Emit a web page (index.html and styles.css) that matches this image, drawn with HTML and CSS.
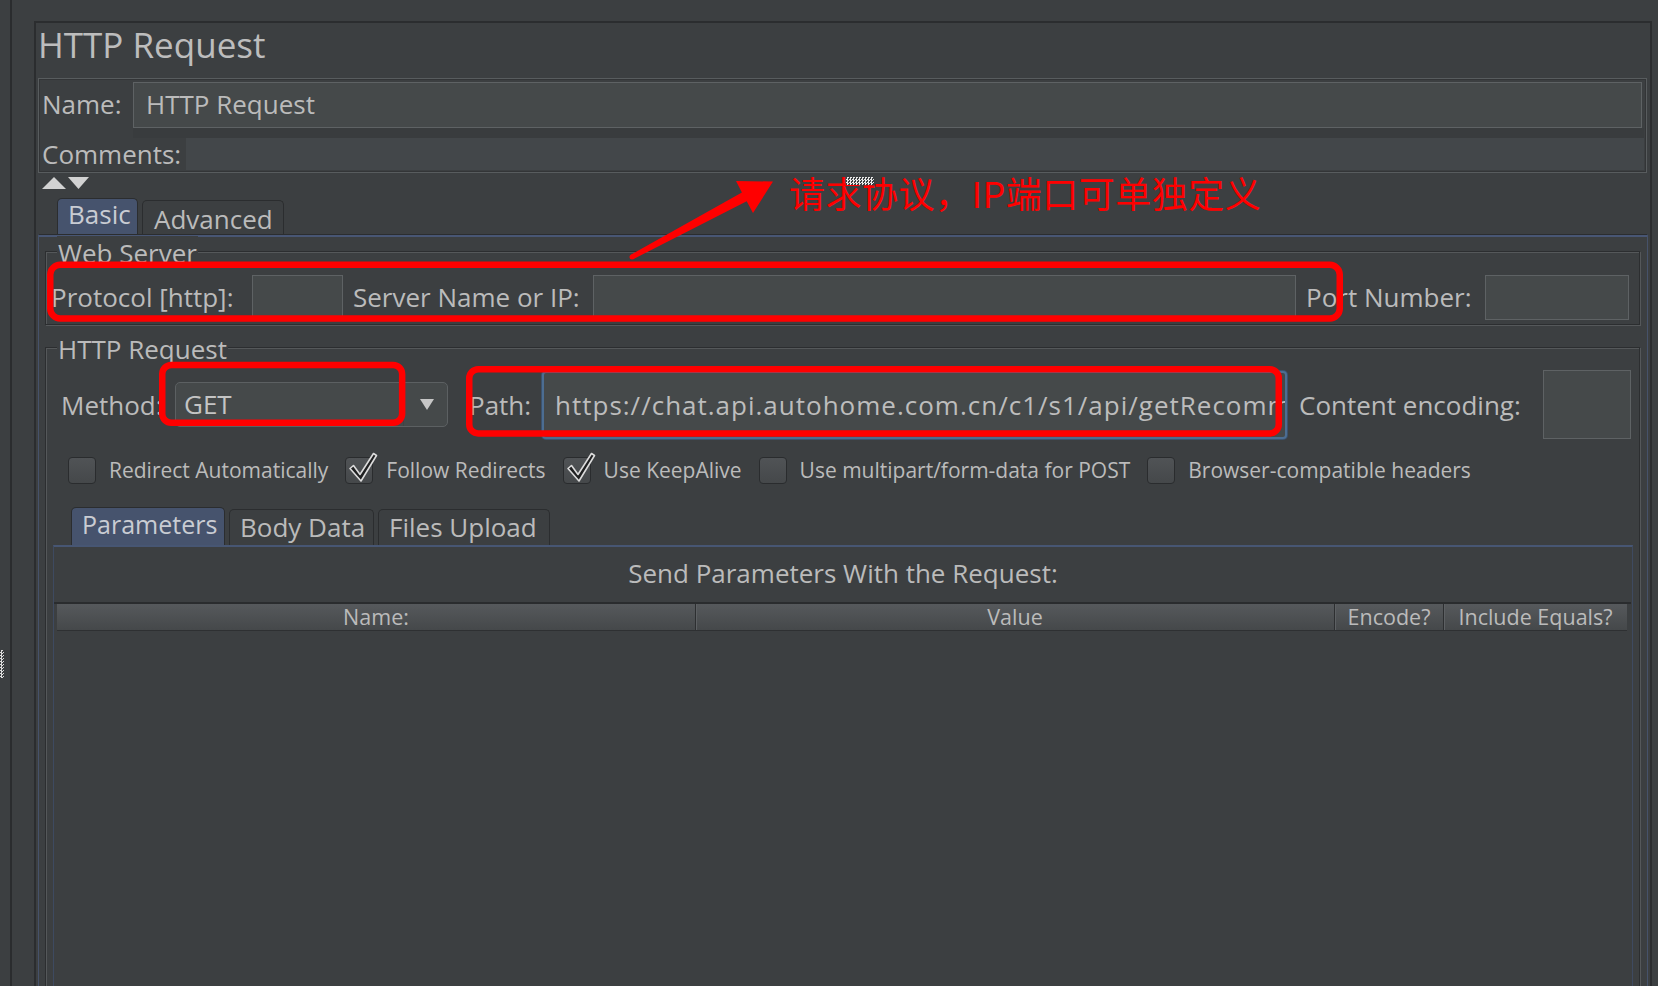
FILE: index.html
```html
<!DOCTYPE html>
<html lang="zh-CN">
<head>
<meta charset="utf-8">
<title>HTTP Request</title>
<link rel="stylesheet" href="styles.css">
</head>
<body>
<div class="app">
  <div class="strip">
    <div class="grip-col"><div class="grip"></div></div>
    <div class="vline"></div>
  </div>

  <main class="panel">
    <h1 class="title">HTTP Request</h1>

    <div class="namebox">
      <div class="name-row">
        <label class="lbl name-lbl">Name:</label>
        <div class="field name-field">HTTP Request</div>
      </div>
      <div class="name-gap"></div>
      <div class="comments-row">
        <label class="lbl comments-lbl">Comments:</label>
        <div class="comments-area"></div>
      </div>
    </div>

    <div class="toggles">
      <svg width="24" height="12" viewBox="0 0 24 12"><polygon points="0,12 12,0 24,12" fill="#d2d2d2"/></svg>
      <svg width="21" height="12" viewBox="0 0 21 12"><polygon points="0,0 21,0 10.5,12" fill="#d2d2d2"/></svg>
    </div>

    <div class="tabs">
      <div class="tab tab-basic active">Basic</div>
      <div class="tab tab-adv">Advanced</div>
    </div>

    <div class="tabpanel">
      <fieldset class="group group-web">
        <legend>Web Server</legend>
        <div class="web-row">
          <label class="lbl w-protocol">Protocol [http]:</label>
          <div class="field f-protocol"></div>
          <label class="lbl w-server">Server Name or IP:</label>
          <div class="field f-server"></div>
          <label class="lbl w-port">Port Number:</label>
          <div class="field f-port"></div>
        </div>
      </fieldset>

      <fieldset class="group group-http">
        <legend>HTTP Request</legend>
        <div class="method-row">
          <label class="lbl w-method">Method:</label>
          <div class="combo">
            <span class="combo-val">GET</span>
            <span class="combo-btn"><svg width="14" height="11" viewBox="0 0 14 11"><polygon points="0,0 14,0 7,11" fill="#c6c6c6"/></svg></span>
          </div>
          <label class="lbl w-path">Path:</label>
          <div class="field f-path">https://chat.api.autohome.com.cn/c1/s1/api/getRecommendList</div>
          <label class="lbl w-enc">Content encoding:</label>
          <div class="field f-enc"></div>
        </div>

        <div class="checks">
          <div class="chk"><span class="box"></span><span>Redirect Automatically</span></div>
          <div class="chk"><span class="box"><svg width="36" height="36" viewBox="0 0 36 36"><polygon class="tick" points="6,17.5 9.5,14.5 16,23.5 29.5,2.5 32.5,4.5 17,30"/></svg></span><span>Follow Redirects</span></div>
          <div class="chk"><span class="box"><svg width="36" height="36" viewBox="0 0 36 36"><polygon class="tick" points="6,17.5 9.5,14.5 16,23.5 29.5,2.5 32.5,4.5 17,30"/></svg></span><span>Use KeepAlive</span></div>
          <div class="chk"><span class="box"></span><span>Use multipart/form-data for POST</span></div>
          <div class="chk"><span class="box"></span><span>Browser-compatible headers</span></div>
        </div>

        <div class="ptabs">
          <div class="ptab ptab-params active">Parameters</div>
          <div class="ptab ptab-body">Body Data</div>
          <div class="ptab ptab-files">Files Upload</div>
        </div>

        <div class="ppanel">
          <div class="send-lbl">Send Parameters With the Request:</div>
          <div class="table">
            <div class="thead">
              <div class="th">Name:</div>
              <div class="th">Value</div>
              <div class="th">Encode?</div>
              <div class="th">Include Equals?</div>
            </div>
          </div>
        </div>
      </fieldset>
    </div>
  </main>

  <svg class="marks" width="1658" height="986" viewBox="0 0 1658 986">
    <g fill="none" stroke="#ff0000" stroke-width="6.5">
      <rect x="50.25" y="264.75" width="1289.5" height="53.7" rx="10"/>
      <rect x="162.25" y="364.95" width="239.9" height="57.8" rx="9"/>
      <rect x="469.25" y="369.25" width="809.5" height="64.2" rx="9"/>
    </g>
    <polygon fill="#ff0000" points="630.8,254.8 741.9,192.4 736,181 773,181.5 753,213 746.7,201.2 633.2,259.2"/>
    <circle cx="632" cy="257" r="2.5" fill="#ff0000"/>
  </svg>
  <div class="note">请求协议，IP端口可单独定义</div>
  <div class="cursor-mark"></div>
</div>
</body>
</html>
```

FILE: styles.css
```css
* { box-sizing: border-box; }
html, body { margin: 0; padding: 0; }
body {
  width: 1658px;
  height: 986px;
  overflow: hidden;
  background: #3c3f41;
  color: #bbbbbb;
  font-family: "Open Sans", "Noto Sans", "DejaVu Sans", sans-serif;
  font-size: 26px;
}

.app {
  position: relative;
  display: flex;
  width: 1658px;
  height: 986px;
  overflow: hidden;
}

/* left strip */
.strip { flex: none; width: 34px; display: flex; }
.grip-col { flex: none; width: 10px; }
.grip {
  margin-top: 650px;
  width: 4px;
  height: 28px;
  background-image: repeating-conic-gradient(#dcdcdc 0 25%, transparent 0 50%);
  background-size: 3px 3px;
}
.vline { flex: none; width: 2px; background: #2a2c2e; }

/* main panel */
.panel {
  flex: none;
  width: 1618px;
  margin-top: 21px;
  border: 2px solid #2b2d2f;
  border-bottom: 0;
  display: flex;
  flex-direction: column;
}
.title {
  margin: 0;
  padding-left: 2px;
  font-size: 35px;
  font-weight: 400;
  line-height: 44px;
  height: 44px;
  color: #bdbdbd;
  white-space: nowrap;
}

.lbl { flex: none; white-space: nowrap; }
.field { background: #45494a; border: 1px solid #5e6264; }

/* name / comments */
.namebox {
  margin: 11px 3px 0 2px;
  border: 1px solid #585c5e;
  box-shadow: inset 0 0 0 1px #333537;
  padding: 3px 2px 2px 0;
}
.name-row { display: flex; height: 46px; }
.name-lbl { width: 94px; padding-left: 3px; line-height: 44px; }
.name-field {
  flex: 1;
  margin-right: 2px;
  padding: 0 0 2px 12px;
  line-height: 42px;
  white-space: nowrap;
}
.name-gap { height: 10px; margin-left: 94px; background: #393c3e; }
.comments-row { display: flex; height: 32px; }
.comments-lbl { width: 147px; padding-left: 3px; line-height: 32px; }
.comments-area { flex: 1; background: #43474a; }

.toggles { display: flex; gap: 2px; margin: 4px 0 0 6px; height: 12px; }
.toggles svg { display: block; }

/* top tabs */
.tabs {
  display: flex;
  align-items: flex-end;
  gap: 4px;
  height: 36px;
  margin: 9px 0 0 21px;
}
.tab {
  height: 34px;
  border: 1px solid #2b2d2f;
  border-bottom: 0;
  border-radius: 5px 5px 0 0;
  padding: 3px 0 0 11px;
  line-height: 30px;
  white-space: nowrap;
}
.tab.active {
  height: 36px;
  padding: 0 0 0 10px;
  background: #46536d;
  color: #c9ccd3;
}
.tab-basic { width: 81px; }
.tab-adv { width: 142px; }

.tabpanel {
  flex: 1;
  margin: 0 2px;
  border-top: 1px solid #2b2d2f;
  border-left: 1px solid #46526a;
  border-right: 1px solid #46526a;
  box-shadow: inset 0 2px 0 #485674;
  display: flex;
  flex-direction: column;
  min-height: 0;
}

/* titled groups */
.group {
  margin: 1px 7px 0 6px;
  padding: 0;
  border: 1px solid #2c2e30;
  box-shadow: 1px 1px 0 #55585a, inset 1px 1px 0 #55585a;
  min-width: 0;
}
.group legend {
  margin-left: 11px;
  padding: 4px 1px 0;
  line-height: 26px;
  font-size: 26px;
  background: #3c3f41;
  white-space: nowrap;
}
.group-http { margin-top: 7px; height: 700px; }

.web-row {
  display: flex;
  height: 45px;
  margin: 9px 0 4px;
  padding: 0 10px 0 5px;
}
.web-row .lbl { line-height: 45px; }
.w-protocol { width: 201px; }
.f-protocol { flex: none; width: 91px; height: 45px; }
.w-server { width: 250px; padding-left: 10px; }
.f-server { flex: 1; height: 45px; }
.w-port { width: 189px; padding-left: 10px; }
.f-port { flex: none; width: 144px; height: 45px; }

.method-row {
  display: flex;
  align-items: center;
  height: 69px;
  margin-top: 8px;
  padding: 0 8px 0 15px;
}
.w-method { width: 114px; }
.combo {
  flex: none;
  width: 273px;
  height: 45px;
  display: flex;
  border: 1px solid #5c6062;
  border-radius: 5px;
  background: #45494a;
}
.combo-val { flex: 1; padding-left: 8px; line-height: 43px; color: #c4c4c4; }
.combo-btn {
  flex: none;
  width: 44px;
  display: flex;
  align-items: center;
  justify-content: center;
  border-left: 1px solid #404345;
}
.combo-btn svg { display: block; margin-left: 2px; }
.w-path { width: 94px; padding-left: 21px; }
.f-path {
  flex: 1;
  min-width: 0;
  height: 68px;
  border: 2px solid #4c6d92;
  border-radius: 4px;
  box-shadow: 0 0 0 1px #3b526e;
  padding-left: 11px;
  line-height: 64px;
  letter-spacing: 1px;
  white-space: nowrap;
  overflow: hidden;
  color: #bdbdbd;
}
.w-enc { width: 256px; padding-left: 12px; }
.f-enc { flex: none; width: 88px; height: 69px; }

/* checkboxes */
.checks {
  display: flex;
  align-items: center;
  height: 27px;
  margin-top: 18px;
  padding-left: 22px;
}
.chk {
  display: flex;
  align-items: center;
  margin-right: 17px;
  font-size: 21px;
  line-height: 27px;
  white-space: nowrap;
}
.box {
  position: relative;
  flex: none;
  width: 28px;
  height: 27px;
  margin-right: 13px;
  border: 1px solid #2a2c2e;
  border-radius: 4px;
  background: linear-gradient(#505356, #45484a);
}
.box svg { position: absolute; left: -2px; top: -7px; }
.tick { fill: #1f2021; stroke: #dcdcdc; stroke-width: 1.6; stroke-linejoin: round; }

/* parameter tabs */
.ptabs {
  display: flex;
  align-items: flex-end;
  gap: 4px;
  height: 38px;
  margin: 23px 0 0 25px;
}
.ptab {
  height: 36px;
  border: 1px solid #2b2d2f;
  border-bottom: 0;
  border-radius: 5px 5px 0 0;
  padding: 2px 0 0 10px;
  line-height: 30px;
  font-size: 26px;
  white-space: nowrap;
}
.ptab.active {
  height: 38px;
  padding: 1px 0 0 10px;
  background: #46536d;
  font-size: 25px;
  color: #c9ccd3;
}
.ptab-params { width: 154px; }
.ptab-body { width: 145px; padding-left: 10px; }
.ptab-files { width: 172px; padding-left: 10px; }

.ppanel {
  margin: 0 6px 0 7px;
  height: 500px;
  border-top: 2px solid #475673;
  border-left: 1px solid #3e4a60;
  border-right: 1px solid #3e4a60;
}
.send-lbl {
  margin-top: 8px;
  line-height: 36px;
  text-align: center;
  white-space: nowrap;
}
.table {
  margin: 11px 1px 0 0;
  border-top: 2px solid #2a2c2e;
  padding: 0 4px 0 3px;
}
.thead {
  display: grid;
  grid-template-columns: 639px 639px 109px 1fr;
  height: 27px;
  background: linear-gradient(#56595c, #45484a);
  border-bottom: 1px solid #2e3032;
}
.th {
  font-size: 21.5px;
  line-height: 26px;
  text-align: center;
  white-space: nowrap;
  border-right: 1px solid #2d2f31;
  box-shadow: inset 1px 0 0 #5d6063;
}
.th:first-child { box-shadow: none; }
.th:last-child { border-right: 0; }

/* annotation overlay */
.marks { position: absolute; left: 0; top: 0; pointer-events: none; }
.note {
  position: absolute;
  left: 789px;
  top: 174px;
  font-family: "Noto Sans CJK SC", "Noto Sans CJK JP", sans-serif;
  font-size: 36px;
  line-height: 36px;
  color: #ff0000;
  white-space: nowrap;
  letter-spacing: 0.5px;
}
.cursor-mark {
  position: absolute;
  left: 846px;
  top: 177px;
  width: 28px;
  height: 8px;
  background-image: repeating-conic-gradient(#e8e8e8 0 25%, #3c3f41 0 50%);
  background-size: 3px 3px;
}
```
